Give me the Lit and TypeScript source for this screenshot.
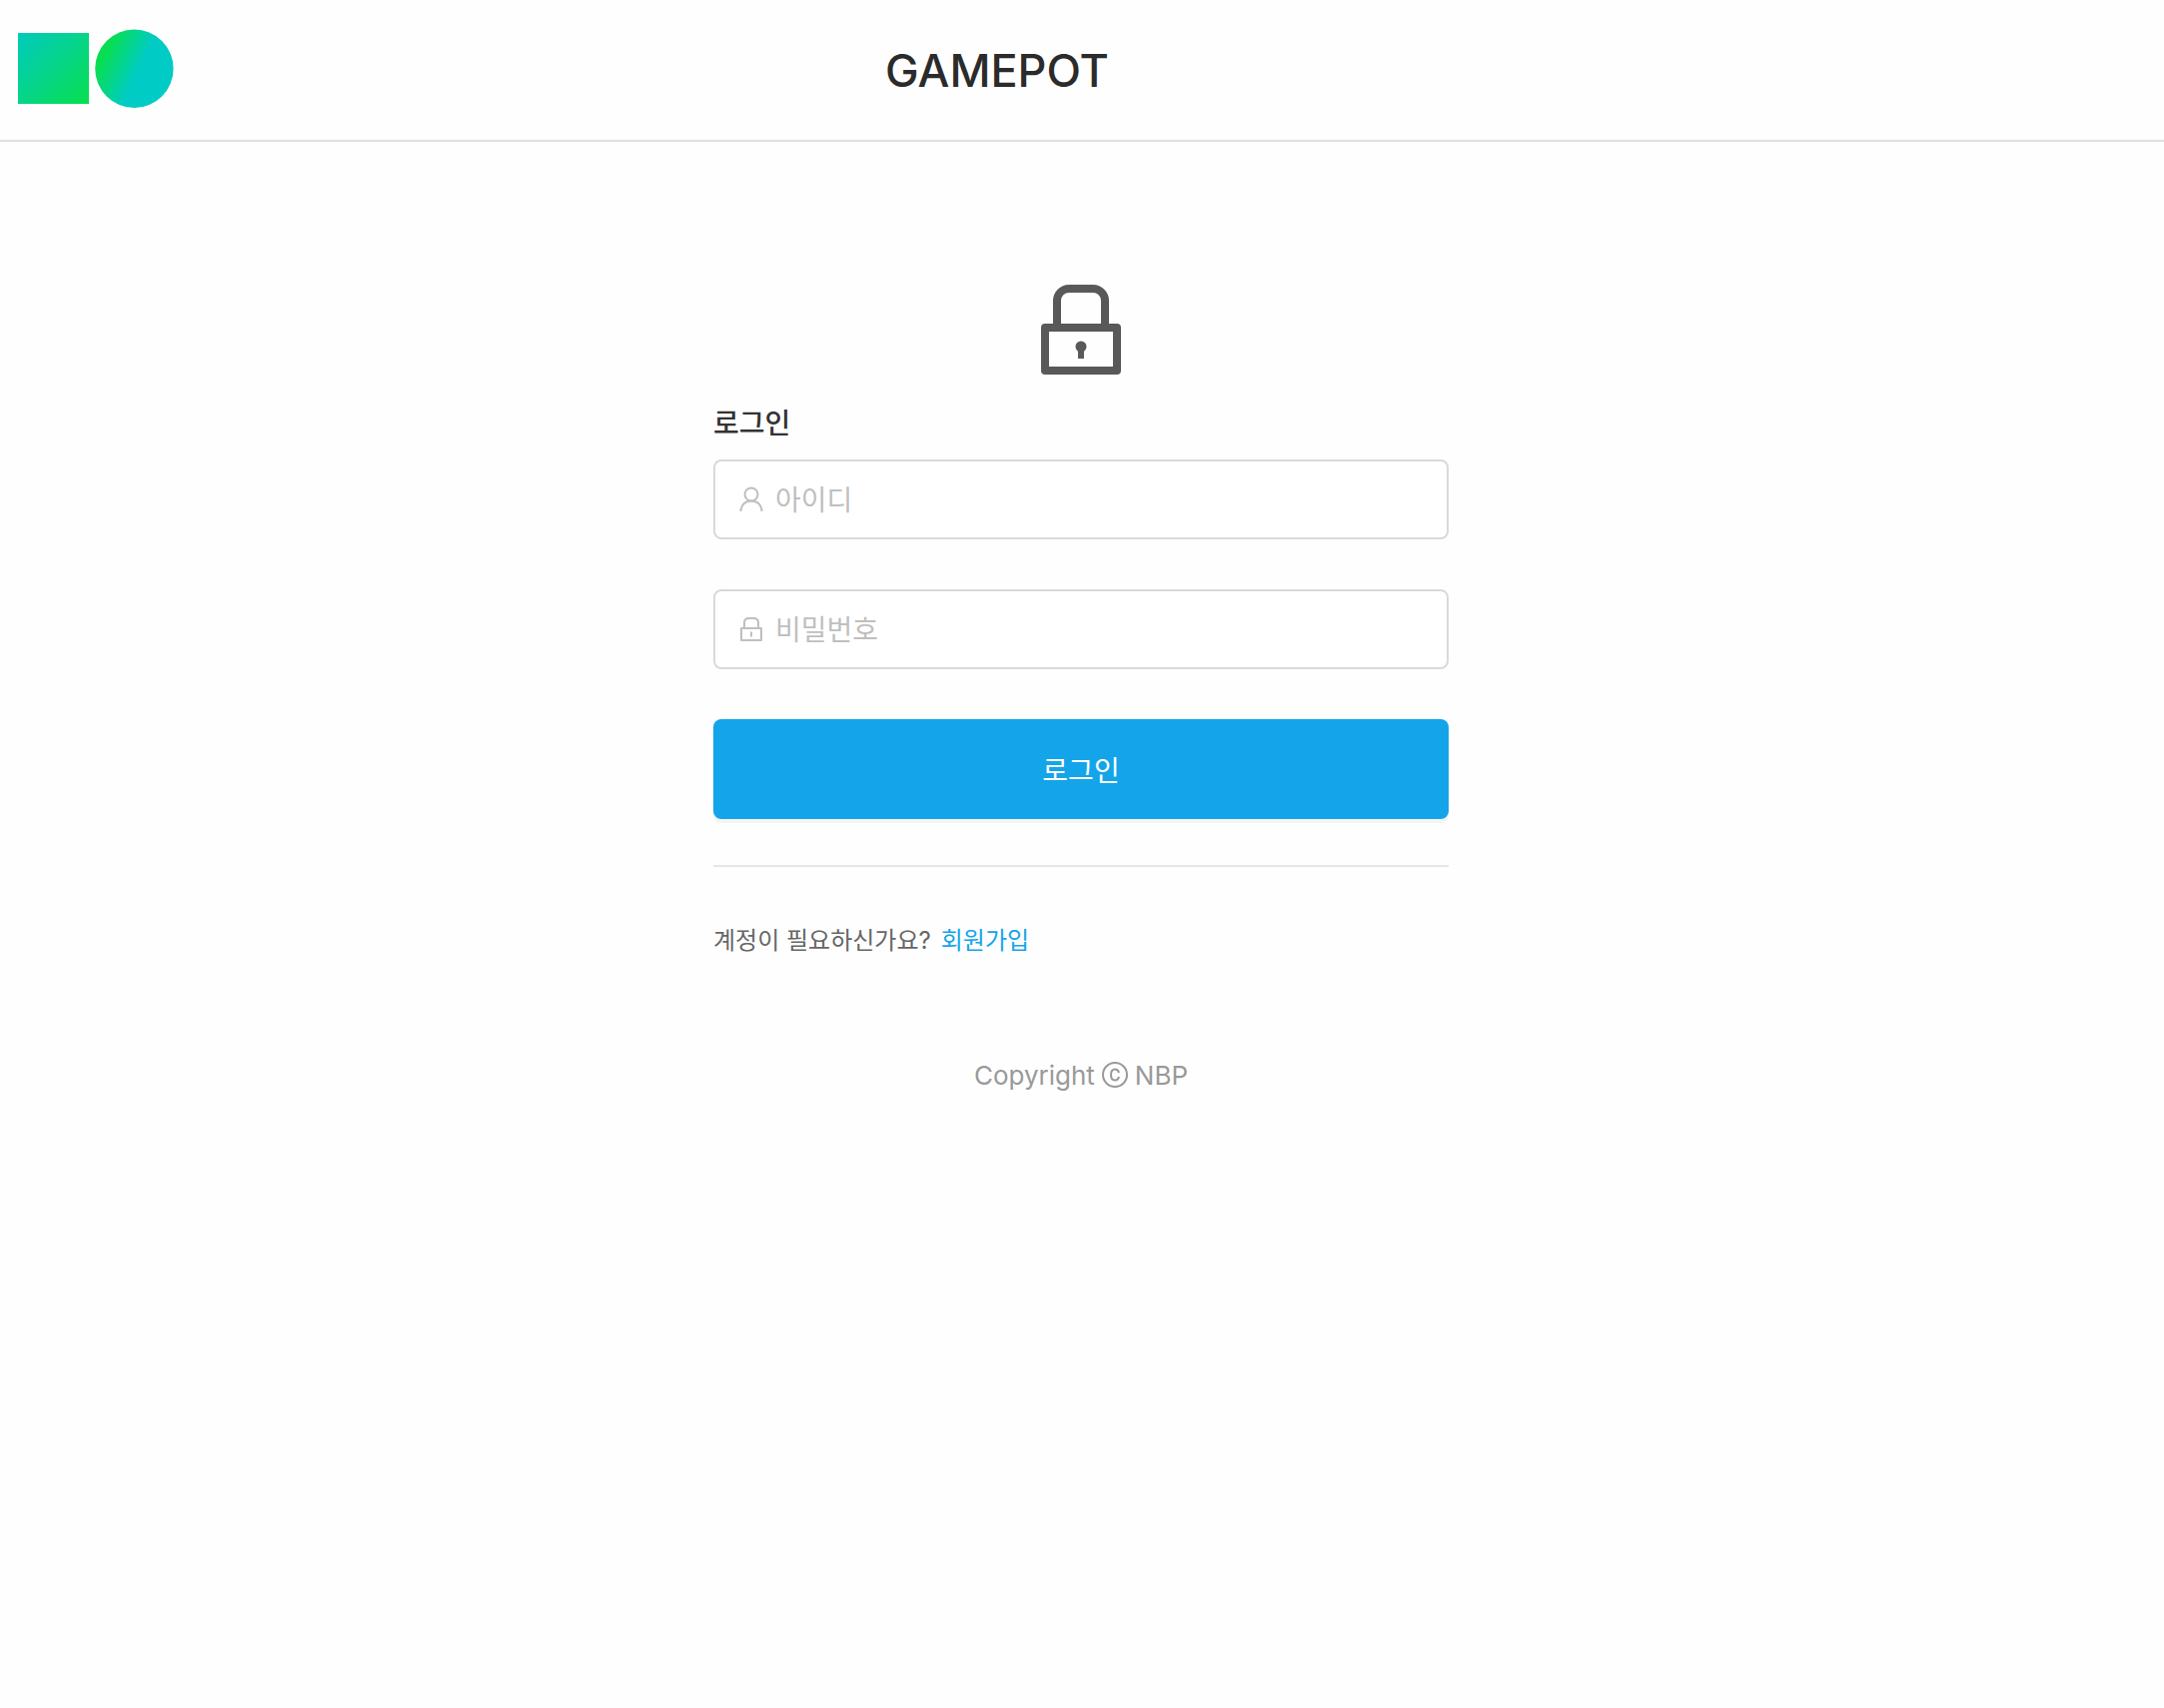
import { LitElement, html, css } from "lit";
import { customElement } from "lit/decorators.js";

@customElement("app-root")
export class AppRoot extends LitElement {
  static styles = css`
    :host {
      display: block;
      min-height: 100vh;
      background: #fefefe;
      color: #2b2b2b;
      font-family: "Inter", "Noto Sans CJK KR", sans-serif;
    }
    *, *::before, *::after { box-sizing: border-box; }
    svg { display: block; }
    .header {
      display: flex;
      align-items: center;
      height: 142px;
      border-bottom: 2px solid #dfe0e4;
    }
    .logo {
      flex: none;
      margin-left: 16px;
    }
    .title {
      flex: 1;
      margin: 0;
      padding: 2px 346px 0 0;
      text-align: center;
      font-size: 45px;
      line-height: 60px;
      font-weight: 500;
    }
    .page { padding: 142px 2px 0 0; }
    .main {
      width: 100%;
      max-width: 736px;
      margin: 0 auto;
    }
    .lock {
      margin: 0 auto;
      color: #595959;
    }
    .heading {
      margin: 26px 0 14px;
      font-size: 28px;
      line-height: 44px;
      font-weight: 500;
      color: #333;
    }
    .form {
      display: flex;
      flex-direction: column;
      gap: 50px;
    }
    .field {
      display: flex;
      align-items: center;
      gap: 12px;
      height: 80px;
      padding: 0 24px;
      border: 2px solid #d9d9d9;
      border-radius: 8px;
      background: #fff;
    }
    .field-icon { flex: none; color: #bfbfbf; }
    .input {
      flex: 1;
      min-width: 0;
      height: 100%;
      padding: 2px 0 0;
      border: 0;
      outline: 0;
      background: none;
      color: #333;
      font: inherit;
      font-size: 28px;
    }
    .input::placeholder { color: #bfbfbf; opacity: 1; }
    .submit {
      height: 100px;
      border: 0;
      border-radius: 8px;
      background: #14a4ea;
      box-shadow: 0 4px 0 rgba(0, 0, 0, 0.04);
      color: #fff;
      font: inherit;
      font-size: 28px;
      cursor: pointer;
    }
    .divider {
      height: 2px;
      margin: 46px 0 0;
      border: 0;
      background: #e6e6e6;
    }
    .signup {
      display: flex;
      gap: 10px;
      margin: 54px 0 0;
      font-size: 24px;
      line-height: 40px;
      color: #666;
    }
    .link { color: #14a4ea; text-decoration: none; }
    .footer {
      display: flex;
      justify-content: center;
      align-items: center;
      gap: 6px;
      margin-top: 95px;
      font-size: 26px;
      line-height: 40px;
      color: #999;
    }
  `;

  render() {
    return html`
      <header class="header">
        <svg class="logo" width="160" height="82" viewBox="0 0 160 82" aria-hidden="true">
          <defs>
            <linearGradient id="square" x1="0" y1="0" x2="1" y2="1">
              <stop offset="0" stop-color="#00cabd" />
              <stop offset="0.5" stop-color="#06d588" />
              <stop offset="1" stop-color="#08df4d" />
            </linearGradient>
            <linearGradient id="circle" x1="0.06" y1="0.28" x2="0.56" y2="0.52">
              <stop offset="0.1" stop-color="#08de50" />
              <stop offset="0.55" stop-color="#04d58a" />
              <stop offset="1" stop-color="#00cbc5" />
            </linearGradient>
          </defs>
          <rect x="2" y="4" width="71" height="71" fill="url(#square)" />
          <circle cx="118.4" cy="39.8" r="39.2" fill="url(#circle)" />
        </svg>
        <h1 class="title">GAMEPOT</h1>
      </header>
      <div class="page">
        <main class="main">
          <svg class="lock" width="82" height="92" viewBox="0 0 82 92" aria-hidden="true"
            fill="none" stroke="currentColor" stroke-width="8">
            <path d="M17 42V17A12 12 0 0 1 29 5H53A12 12 0 0 1 65 17V42" />
            <rect x="5" y="44" width="72" height="43" stroke-linejoin="round" />
            <circle cx="41" cy="63" r="5.5" fill="currentColor" stroke="none" />
            <path d="M41 63V75" stroke-width="6" />
          </svg>
          <h2 class="heading">로그인</h2>
          <form class="form" @submit=${(e: Event) => e.preventDefault()}>
            <label class="field">
              <svg class="field-icon" width="24" height="28" viewBox="0 0 24 28" aria-hidden="true"
                fill="none" stroke="currentColor" stroke-width="2">
                <circle cx="12" cy="9" r="6.5" />
                <path d="M1.5 26C1.5 19.5 6 15.5 12 15.5S22.5 19.5 22.5 26" />
              </svg>
              <input class="input" type="text" name="username" autocomplete="username" placeholder="아이디" aria-label="아이디" />
            </label>
            <label class="field">
              <svg class="field-icon" width="24" height="28" viewBox="0 0 24 28" aria-hidden="true"
                fill="none" stroke="currentColor" stroke-width="2">
                <path d="M5 13V7.5Q5 3 9.5 3H14.5Q19 3 19 7.5V13" />
                <rect x="2" y="13" width="20" height="12" stroke-linejoin="round" />
                <path d="M12 16.5V21.5" />
              </svg>
              <input class="input" type="password" name="password" autocomplete="current-password" placeholder="비밀번호" aria-label="비밀번호" />
            </label>
            <button class="submit" type="submit">로그인</button>
          </form>
          <hr class="divider" />
          <p class="signup"><span>계정이 필요하신가요?</span><a class="link" href="#signup">회원가입</a></p>
        </main>
        <footer class="footer">
          <span>Copyright</span>
          <svg width="28" height="28" viewBox="0 0 28 28" aria-hidden="true"
            fill="none" stroke="currentColor" stroke-width="2">
            <circle cx="14" cy="13" r="12" />
            <path d="M18 11C17.4 8.4 16 7.5 14 7.5C11.3 7.5 10 9.7 10 13S11.300 18.500 14 18.500C16 18.500 17.400 17.600 18 15" />
          </svg>
          <span>NBP</span>
        </footer>
      </div>
    `;
  }
}
